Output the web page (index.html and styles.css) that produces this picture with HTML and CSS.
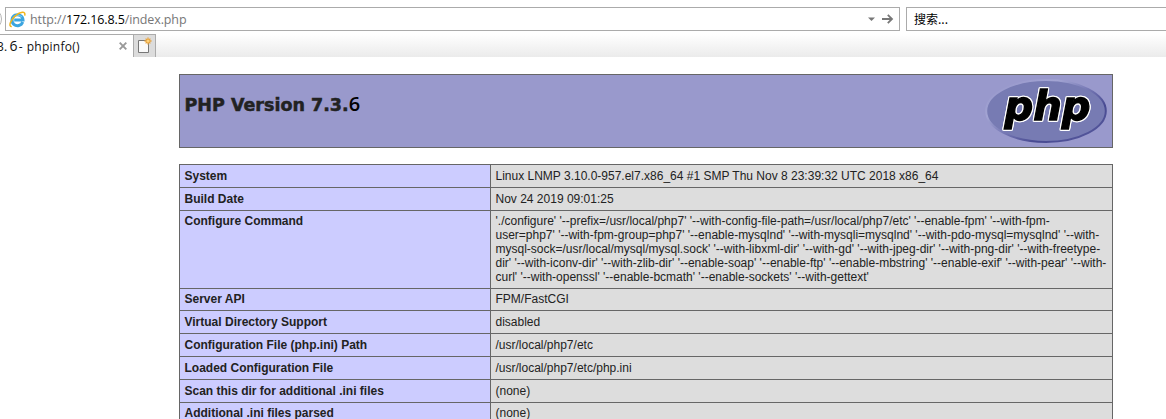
FILE: index.html
```html
<!DOCTYPE html>
<html lang="zh">
<head>
<meta charset="utf-8">
<title>PHP 7.3.6 - phpinfo()</title>
<link rel="stylesheet" href="styles.css">
</head>
<body>
<header class="toolbar">
  <svg class="nav-edge" width="5" height="24" viewBox="0 0 5 24"><path d="M-1 5Q1.500 8 1.500 12T-1 19" fill="none" stroke="#b5b5b5"/></svg>
  <div class="address">
    <svg class="ie" width="17" height="17" viewBox="0 0 17 17">
      <path d="M13.700 11A5.500 5.500 0 1 1 14 8.900H5.200" fill="none" stroke="#3ba5e0" stroke-width="3"/>
      <path d="M3.500 7.200Q8 1.500 13 6" fill="none" stroke="#7bd0f5" stroke-width="1"/>
      <path d="M2.800 15.600C-1 15.800 1.500 8.800 6.500 4.700C11 .8 17 -.6 15.700 4.600" fill="none" stroke="#f2b61c" stroke-width="1.500"/>
    </svg>
    <span class="url">http://<b>172.16.8.5</b>/index.php</span>
    <svg class="go" width="28" height="12" viewBox="0 0 28 12"><path d="M0 4.500h7L3.500 8z" fill="#777"/><path d="M14 6h10M19.800 1.800L24 6l-4.200 4.200" fill="none" stroke="#777" stroke-width="1.800"/></svg>
  </div>
  <div class="search">搜索...</div>
</header>
<nav class="tabs">
  <div class="tab"><span class="tab-title"><span class="ver">3.<i>6</i>-</span><span class="name">phpinfo()</span></span>
    <svg class="close" width="8" height="8" viewBox="0 0 8 8"><path d="M.7.7l6.600 6.600M7.300.7L.7 7.300" stroke="#999" stroke-width="1.900"/></svg>
  </div>
  <div class="new-tab">
    <svg width="16" height="17" viewBox="0 0 16 17"><path d="M1.500 3.500h10v12h-10z" fill="#fafafa" stroke="#777"/><path d="M11 .5v7M7.500 4h7M8.600 1.600l4.800 4.800M13.400 1.600L8.600 6.400" stroke="#e8a33c" stroke-width="1.300"/><circle cx="11" cy="4" r="1.500" fill="#ffd27a"/></svg>
  </div>
</nav>
<main class="page">
  <section class="banner">
    <h1>PHP Version 7.3.<span>6</span></h1>
    <svg class="logo" width="122" height="66" viewBox="0 0 122 66">
      <defs>
        <linearGradient id="rim" x1="0" y1="0" x2="1" y2="1"><stop offset="0.100" stop-color="#9999cc"/><stop offset="0.300" stop-color="#a3a5d3"/><stop offset="0.500" stop-color="#7779b5"/><stop offset="0.700" stop-color="#484a92"/><stop offset="1" stop-color="#5a5c9f"/></linearGradient>
      </defs>
      <ellipse cx="61" cy="33" rx="59.800" ry="31" fill="#777bb3" stroke="url(#rim)" stroke-width="2"/>
      <text class="php" x="19.500" y="41.500" textLength="86" lengthAdjust="spacingAndGlyphs">php</text>
    </svg>
  </section>
  <section class="info">
    <div class="key">System</div><div class="val">Linux LNMP 3.10.0-957.el7.x86_64 #1 SMP Thu Nov 8 23:39:32 UTC 2018 x86_64</div>
    <div class="key">Build Date</div><div class="val">Nov 24 2019 09:01:25</div>
    <div class="key tight">Configure Command</div><div class="val tight">'./configure' '--prefix=/usr/local/php7' '--with-config-file-path=/usr/local/php7/etc' '--enable-fpm' '--with-fpm-<br>user=php7' '--with-fpm-group=php7' '--enable-mysqlnd' '--with-mysqli=mysqlnd' '--with-pdo-mysql=mysqlnd' '--with-<br>mysql-sock=/usr/local/mysql/mysql.sock' '--with-libxml-dir' '--with-gd' '--with-jpeg-dir' '--with-png-dir' '--with-freetype-<br>dir' '--with-iconv-dir' '--with-zlib-dir' '--enable-soap' '--enable-ftp' '--enable-mbstring' '--enable-exif' '--with-pear' '--with-<br>curl' '--with-openssl' '--enable-bcmath' '--enable-sockets' '--with-gettext'</div>
    <div class="key tight">Server API</div><div class="val tight">FPM/FastCGI</div>
    <div class="key">Virtual Directory Support</div><div class="val">disabled</div>
    <div class="key">Configuration File (php.ini) Path</div><div class="val">/usr/local/php7/etc</div>
    <div class="key">Loaded Configuration File</div><div class="val">/usr/local/php7/etc/php.ini</div>
    <div class="key">Scan this dir for additional .ini files</div><div class="val">(none)</div>
    <div class="key tight">Additional .ini files parsed</div><div class="val tight">(none)</div>
  </section>
</main>
</body>
</html>
```
FILE: styles.css
```css
* { box-sizing: border-box; }
body { margin: 0; height: 419px; overflow: hidden; background: #fff; color: #222; font-family: "Liberation Sans", Arial, sans-serif; }
.toolbar { display: flex; height: 34px; padding-top: 7px; }
.nav-edge { width: 5px; flex: none; }
.address { display: flex; align-items: center; width: 895px; height: 24px; border: 1px solid #ababab; padding: 0 3px; flex: none; }
.ie { flex: none; }
.url { margin-left: 4px; font: 12.500px "Open Sans", sans-serif; letter-spacing: -.11px; color: #777; white-space: nowrap; flex: 1; }
.url b { font-weight: 400; color: #000; }
.go { flex: none; }
.search { margin-left: 6px; flex: 1; height: 24px; border: 1px solid #ababab; border-right: 0; padding-left: 7px; font: 12px/22px "Noto Sans CJK SC", sans-serif; color: #000; }
.tabs { display: flex; height: 23px; background: linear-gradient(#fff, #ebebeb); }
.tab { width: 133px; display: flex; align-items: center; justify-content: space-between; border-top: 1px solid #ababab; background: #fff; padding-right: 6px; overflow: hidden; }
.tab-title { display: flex; align-items: baseline; gap: 4px; margin: 0 0 2px -3px; font: 12px "Open Sans", sans-serif; color: #111; white-space: nowrap; }
.ver { letter-spacing: .2px; }
.name { letter-spacing: .25px; }
.tab-title i { font-style: normal; font-size: 14px; margin: 0 1px 0 2px; }
.close { flex: none; }
.new-tab { width: 23px; border: 1px solid #ababab; border-bottom: 0; background: #dcdcdc; padding: 2px 0 0 3px; }
.new-tab svg { display: block; }
.page { width: 934px; margin: 17px 0 0 179px; }
.banner { display: flex; justify-content: space-between; height: 74px; border: 1px solid #666; background: #99c; padding: 3px 5px 0 4.500px; }
h1 { margin: 15px 0 0; font: 700 17.500px/22px "DejaVu Sans", sans-serif; -webkit-text-stroke: .5px #222; white-space: nowrap; }
h1 span { color: #000; font: 600 20px/22px "Open Sans", sans-serif; -webkit-text-stroke: 0; }
.logo { display: block; overflow: visible; }
.php { font: italic 700 40px "DejaVu Sans", sans-serif; fill: #000; stroke: #000; stroke-width: 1.300px; filter: drop-shadow(1px 0 0 #fff) drop-shadow(-1px 0 0 #fff) drop-shadow(0 1px 0 #fff) drop-shadow(0 -1px 0 #fff); }
.info { display: grid; grid-template-columns: 311px 622px; grid-template-rows: 23px 23px 78px 22px 23px 23px 23px 23px 23px; margin-top: 16px; border: solid #666; border-width: 1px 0 0 1px; width: 934px; font-size: 12px; line-height: 14px; }
.key, .val { border: solid #666; border-width: 0 1px 1px 0; padding: 4px 4.500px; white-space: nowrap; }
.key { background: #ccf; font-weight: 700; }
.val { background: #ddd; }
.tight { padding-top: 3px; }
```
